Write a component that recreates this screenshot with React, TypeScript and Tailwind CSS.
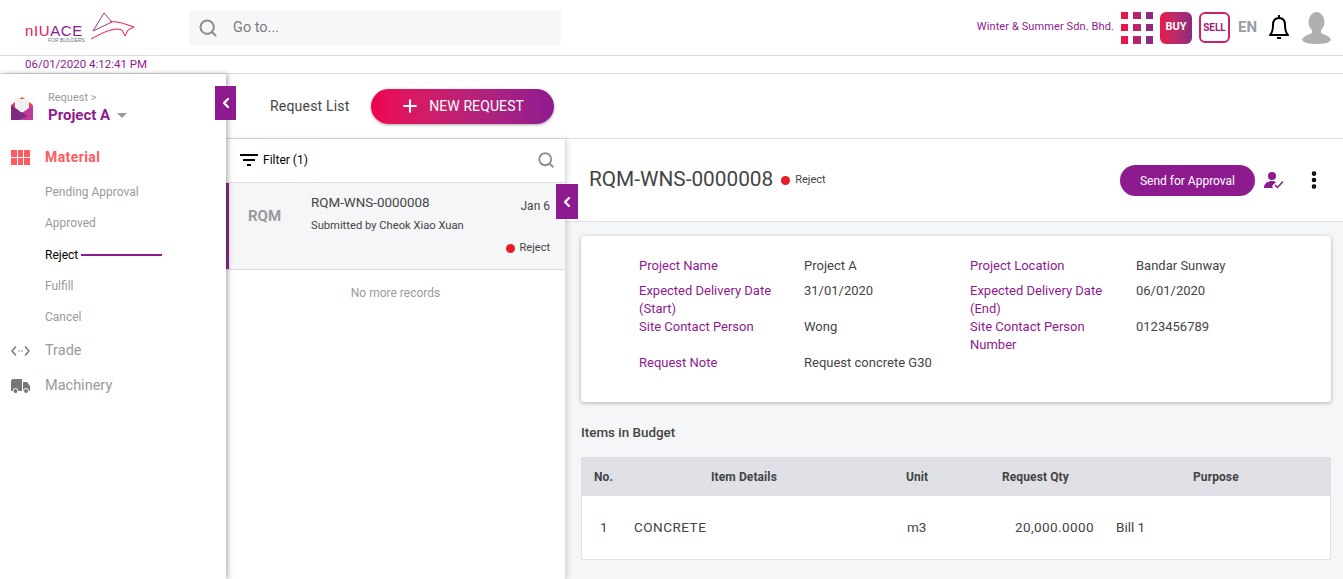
import { ChevronLeft, EllipsisVertical, Plus, Search } from "lucide-react";

const font = "font-['Roboto','Liberation_Sans',sans-serif]";

const details = [
  ["Project Name", "Project A", "Project Location", "Bandar Sunway"],
  ["Expected Delivery Date (Start)", "31/01/2020", "Expected Delivery Date (End)", "06/01/2020"],
  ["Site Contact Person", "Wong", "Site Contact Person Number", "0123456789"],
  ["Request Note", "Request concrete G30", "", ""],
];

function Logo() {
  return (
    <div className="relative h-[32px] w-[110px]">
      <span className="absolute left-0 top-[10px] font-['Liberation_Sans',sans-serif] text-[15px] leading-[18px] tracking-[0.6px] text-[#8e1a90]">
        <span className="text-[#e5174f]">nIU</span>ACE
      </span>
      <span className="absolute left-[23px] top-[25px] font-['Liberation_Sans',sans-serif] text-[5px] leading-[6px] text-gray-500">
        FOR BUILDERS
      </span>
      <svg className="absolute left-[65px] top-0" width="46" height="30" viewBox="0 0 46 30" fill="none" strokeWidth="1">
        <path d="M3 19 L14 1 L22 10 L3 19 Z" stroke="#a23a8c" />
        <path d="M20 10 C26 9 32 11 38 13 L44 15 L38 18 L35 24 L32 18 C24 15 14 20 1 27" stroke="#e5174f" />
      </svg>
    </div>
  );
}

function Grid({ colors, size, gap }: { colors: string[]; size: string; gap: string }) {
  return (
    <div className={`grid grid-cols-3 ${size} ${gap}`}>
      {colors.map((c, i) => (
        <span key={i} style={{ background: c }} />
      ))}
    </div>
  );
}

function Header() {
  return (
    <header className="flex h-[56px] items-center border-b border-[#dddddd] bg-white">
      <div className="ml-[25px] w-[164px]">
        <Logo />
      </div>
      <div className="flex h-[35px] w-[372px] items-center bg-[#f6f7f9] pl-[9px] text-[#8f8f8f]">
        <Search size={20} strokeWidth={2.5} />
        <span className="ml-[15px] text-[14.5px] text-[#7b7b7b]">Go to...</span>
      </div>
      <div className="ml-auto flex items-center pr-[12px]">
        <span className="text-[11px] tracking-[0.1px] text-[#8e1a90]">Winter &amp; Summer Sdn. Bhd.</span>
        <div className="ml-[7px]">
          <Grid
            size="h-[32px] w-[32px]"
            gap="gap-[5px]"
            colors={["#e8174b", "#b9246c", "#8e2a80", "#e8174b", "#b9246c", "#8e2a80", "#e8174b", "#b9246c", "#8e2a80"]}
          />
        </div>
        <div className="ml-[7px] flex h-[32px] w-[32px] items-center justify-center rounded-[6px] bg-gradient-to-r from-[#e8174b] to-[#8e2a80] text-[11px] font-bold text-white">
          BUY
        </div>
        <div className="ml-[7px] flex h-[31px] w-[31px] items-center justify-center rounded-[6px] border-2 border-[#cf2265] text-[10px] font-bold text-[#a32079]">
          SELL
        </div>
        <span className="ml-[8px] text-[15px] font-bold text-[#9b9ea3]">EN</span>
        <svg className="ml-[12px]" width="20" height="25" viewBox="0 0 20 25" fill="none" stroke="#000000" strokeWidth="2">
          <path d="M1 20 C4 17 4 14 4 10 C4 6 6 3 10 3 C14 3 16 6 16 10 C16 14 16 17 19 20 Z" strokeLinejoin="round" />
          <path d="M10 0 V3" />
          <path d="M8 23 H12" />
        </svg>
        <svg className="ml-[13px]" width="29" height="32" viewBox="0 0 29 32" fill="#b0b0b0">
          <ellipse cx="14.5" cy="10" rx="8" ry="10" />
          <path d="M10 17 L19 17 L19 21 C23 23 28 24 29 28 C27 31 22 32 14.5 32 C7 32 2 31 0 28 C1 24 6 23 10 21 Z" />
        </svg>
      </div>
    </header>
  );
}

function Sidebar() {
  return (
    <aside className="relative z-20 w-[226px] shrink-0 bg-white shadow-[2px_0_5px_rgba(0,0,0,0.3)]">
      <button className="absolute left-[215px] top-[12px] flex h-[34px] w-[21px] items-center justify-center bg-[#8e1a90] text-white">
        <ChevronLeft size={16} strokeWidth={3.5} />
      </button>
      <div className="flex pl-[11px] pt-[17px]">
        <svg className="mt-[6px]" width="22" height="24" viewBox="0 0 22 24">
          <path d="M8 2 L11 0 L14 2 Z" fill="#ee5a4e" />
          <path d="M0 8 L4 5 L4 12 Z M22 8 L18 5 L18 12 Z" fill="#e8413f" />
          <rect x="4" y="2" width="14" height="12" fill="#f1f1f1" />
          <path d="M0 8 L11 16 L22 8 V23 H0 Z" fill="#c2389c" />
          <path d="M0 8 L11 16 L0 23 Z" fill="#7e2a82" />
          <path d="M0 23 L11 15 L16 19 L8 23 Z" fill="#7e2a82" />
        </svg>
        <div className="ml-[15px]">
          <div className="text-[11px] leading-[14px] text-[#9a9a9a]">Request &gt;</div>
          <div className="mt-[1px] flex items-center text-[15px] font-bold leading-[18px] text-[#8e1a90]">
            Project A
            <span className="ml-[7px] mt-[1px] h-0 w-0 border-x-[5px] border-t-[5px] border-x-transparent border-t-[#9a9a9a]" />
          </div>
        </div>
      </div>
      <div className="mt-[23px] flex h-[20px] items-center pl-[11px]">
        <Grid size="h-[15px] w-[19px]" gap="gap-[1px]" colors={Array.from({ length: 6 }, () => "#ff5a5f")} />
        <span className="ml-[15px] text-[14px] font-bold tracking-[0.4px] text-[#ff5a5f]">Material</span>
      </div>
      <nav className="mt-[9px] flex flex-col pl-[45px] text-[12px] text-[#9a9a9a]">
        <span className="flex h-[31px] items-center">Pending Approval</span>
        <span className="flex h-[32px] items-center">Approved</span>
        <span className="flex h-[31px] items-center text-black">
          Reject
          <span className="ml-[3px] h-[2px] w-[81px] bg-[#8e1a90]" />
        </span>
        <span className="flex h-[31px] items-center">Fulfill</span>
        <span className="flex h-[31px] items-center">Cancel</span>
      </nav>
      <div className="mt-[9px] flex h-[20px] items-center pl-[11px] text-[14.5px] text-[#9a9a9a]">
        <svg width="19" height="12" viewBox="0 0 19 12" fill="none" stroke="#777777" strokeWidth="1.5">
          <path d="M5 1.5 L1 6 L5 10.5 M14 1.5 L18 6 L14 10.5" />
          <path d="M7.5 6 H8.5 M10.5 6 H11.5" />
        </svg>
        <span className="ml-[15px]">Trade</span>
      </div>
      <div className="mt-[15px] flex h-[20px] items-center pl-[11px] text-[14.5px] text-[#9a9a9a]">
        <svg width="19" height="15" viewBox="0 0 19 15" fill="#777777">
          <path d="M0 2 C0 1 1 0 2 0 H11 V12 H0 Z" />
          <path d="M12 3 H16 L19 7 V12 H12 Z" />
          <circle cx="4.5" cy="12" r="2.5" stroke="#ffffff" />
          <circle cx="15" cy="12" r="2.5" stroke="#ffffff" />
        </svg>
        <span className="ml-[15px]">Machinery</span>
      </div>
    </aside>
  );
}

function RequestList() {
  return (
    <section className="relative z-10 w-[340px] shrink-0 border-r border-[#dddddd] bg-white shadow-[2px_0_5px_rgba(0,0,0,0.12)]">
      <div className="flex h-[44px] items-center border-b border-[#dddddd] pb-[2px] pl-[14px] pr-[10px]">
        <svg width="18" height="14" viewBox="0 0 18 14" fill="none" stroke="#000000" strokeWidth="2">
          <path d="M0 2 H18 M3 7 H15 M7 12 H11" />
        </svg>
        <span className="ml-[5px] text-[12px] text-black">Filter (1)</span>
        <Search className="ml-auto text-[#8f8f8f]" size={18} strokeWidth={2.5} />
      </div>
      <div className="relative h-[87px] border-b border-[#dddddd] bg-[#f5f6f8]">
        <span className="absolute inset-y-0 left-0 w-[3px] bg-[#8e2a90]" />
        <div className="flex pl-[22px] pt-[11px]">
          <span className="mt-[12px] w-[63px] text-[15px] font-bold leading-[20px] text-[#9a9a9a]">RQM</span>
          <div className="flex-1 pr-[15px]">
            <div className="flex items-start justify-between">
              <span className="text-[13.4px] leading-[18px] text-[#444444]">RQM-WNS-0000008</span>
              <span className="mt-[3px] text-[12px] text-[#444444]">Jan 6</span>
            </div>
            <div className="mt-[4px] text-[11.2px] leading-[14px] text-[#444444]">Submitted by Cheok Xiao Xuan</div>
            <div className="mt-[7px] flex items-center justify-end text-[11px] text-[#444444]">
              <span className="mr-[5px] h-[9px] w-[9px] rounded-full bg-[#e81c24]" />
              Reject
            </div>
          </div>
        </div>
      </div>
      <div className="mt-[14px] text-center text-[12px] text-[#9a9a9a]">No more records</div>
      <button className="absolute left-[330px] top-[45px] flex h-[35px] w-[22px] items-center justify-center bg-[#8e1a90] text-white">
        <ChevronLeft size={16} strokeWidth={3.5} />
      </button>
    </section>
  );
}

function Detail() {
  return (
    <section className="flex-1 bg-[#f5f6f8]">
      <div className="flex h-[83px] items-center border-b border-[#dfe1e5] bg-white pl-[23px] pr-[18px]">
        <span className="text-[20.8px] text-[#444444]">RQM-WNS-0000008</span>
        <span className="ml-[8px] h-[9px] w-[9px] rounded-full bg-[#e81c24]" />
        <span className="ml-[5px] text-[11px] text-[#444444]">Reject</span>
        <button className="ml-auto flex h-[31px] w-[135px] items-center justify-center rounded-full bg-[#8e1a90] pt-[2px] text-[12px] text-white">
          Send for Approval
        </button>
        <svg className="ml-[9px]" width="20" height="18" viewBox="0 0 20 18" fill="#8e1a90">
          <circle cx="8" cy="5" r="4" />
          <path d="M0 17 C0 12 4 10 8 10 C10 10 11 10.500 12 11 L8 15 L9 17 Z" />
          <path d="M11 14 L13.500 16.500 L19 10.500" fill="none" stroke="#8e1a90" strokeWidth="1.500" />
        </svg>
        <EllipsisVertical className="ml-[19px] text-black" size={22} strokeWidth={3} />
      </div>
      <div className="pl-[15px] pr-[12px]">
        <div className="mt-[14px] grid h-[166px] grid-cols-[165px_166px_166px_1fr] content-start rounded-[3px] bg-white pl-[58px] pt-[21px] text-[13px] leading-[18px] shadow-[0_1px_4px_rgba(0,0,0,0.3)]">
          {details.map((row, r) =>
            row.map((cell, i) => (
              <span
                key={row[0] + i}
                className={`pr-[15px] ${r === 0 ? "mb-[7px]" : ""} ${i % 2 === 0 ? "text-[#8e1a90]" : "text-[#444444]"}`}
              >
                {cell}
              </span>
            )),
          )}
        </div>
        <h3 className="mt-[23px] text-[13.4px] font-medium leading-[16px] text-[#444444]">Items in Budget</h3>
        <div className="mt-[16px] border border-[#dfe1e5] bg-white text-[#444444]">
          <div className="grid h-[38px] grid-cols-[42px_240px_94px_172px_1fr] items-center bg-[#dfe1e6] text-[12px] font-bold tracking-[0.1px]">
            <span className="pl-[12px]">No.</span>
            <span className="pl-[87px]">Item Details</span>
            <span className="pl-[42px]">Unit</span>
            <span className="pl-[44px]">Request Qty</span>
            <span className="pl-[63px]">Purpose</span>
          </div>
          <div className="grid h-[63px] grid-cols-[52px_273px_62px_125px_1fr] items-center text-[13.5px]">
            <span className="pl-[18px]">1</span>
            <span className="tracking-[0.5px]">CONCRETE</span>
            <span>m3</span>
            <span className="text-right tracking-[0.4px]">20,000.0000</span>
            <span className="pl-[22px]">Bill 1</span>
          </div>
        </div>
      </div>
    </section>
  );
}

export default function App() {
  return (
    <div className={`flex h-[579px] w-[1343px] flex-col overflow-hidden bg-white ${font}`}>
      <Header />
      <div className="flex h-[18px] items-center border-b border-[#dddddd] pl-[25px] text-[11.5px] text-[#8e1a90]">
        06/01/2020 4:12:41 PM
      </div>
      <div className="flex flex-1">
        <Sidebar />
        <main className="flex min-w-0 flex-1 flex-col">
          <div className="flex h-[65px] shrink-0 items-center border-b border-[#dddddd] pl-[44px]">
            <span className="text-[14px] tracking-[0.2px] text-[#444444]">Request List</span>
            <button className="ml-[21px] flex h-[35px] w-[183px] items-center justify-center rounded-full bg-gradient-to-r from-[#ee0050] to-[#8e1a90] text-[14px] tracking-[0.1px] text-white shadow-[0_1px_3px_rgba(0,0,0,0.35)]">
              <Plus size={20} strokeWidth={2.5} />
              <span className="ml-[9px]">NEW REQUEST</span>
            </button>
          </div>
          <div className="flex flex-1">
            <RequestList />
            <Detail />
          </div>
        </main>
      </div>
    </div>
  );
}
